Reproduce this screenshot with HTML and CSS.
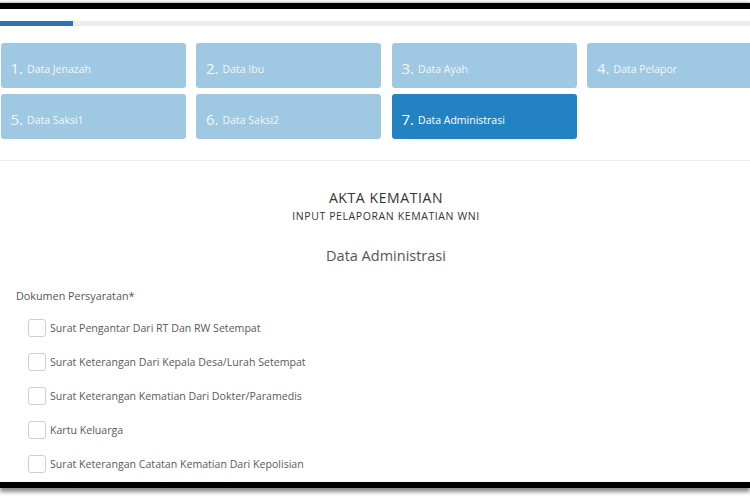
FILE: index.html
```html
<!DOCTYPE html>
<html lang="id">
<head>
<meta charset="utf-8">
<title>Akta Kematian</title>
<link rel="stylesheet" href="styles.css">
</head>
<body>
<div class="frame">
  <div class="page">
    <div class="progress"><div class="progress-fill" style="width:73px"></div></div>
    <div class="steps">
      <div class="step"><span class="num">1.</span><span class="lbl">Data Jenazah</span></div>
      <div class="step"><span class="num">2.</span><span class="lbl">Data Ibu</span></div>
      <div class="step"><span class="num">3.</span><span class="lbl">Data Ayah</span></div>
      <div class="step"><span class="num">4.</span><span class="lbl">Data Pelapor</span></div>
      <div class="step"><span class="num">5.</span><span class="lbl">Data Saksi1</span></div>
      <div class="step"><span class="num">6.</span><span class="lbl">Data Saksi2</span></div>
      <div class="step active"><span class="num">7.</span><span class="lbl">Data Administrasi</span></div>
    </div>
    <div class="divider"></div>
    <div class="heading">
      <h1 class="title">AKTA KEMATIAN</h1>
      <div class="subtitle">INPUT PELAPORAN KEMATIAN WNI</div>
      <h2 class="section">Data Administrasi</h2>
    </div>
    <div class="form">
      <div class="field-label">Dokumen Persyaratan*</div>
      <ul class="checks">
        <li class="check"><span class="box"></span><span>Surat Pengantar Dari RT Dan RW Setempat</span></li>
        <li class="check"><span class="box"></span><span>Surat Keterangan Dari Kepala Desa/Lurah Setempat</span></li>
        <li class="check"><span class="box"></span><span>Surat Keterangan Kematian Dari Dokter/Paramedis</span></li>
        <li class="check"><span class="box"></span><span>Kartu Keluarga</span></li>
        <li class="check"><span class="box"></span><span>Surat Keterangan Catatan Kematian Dari Kepolisian</span></li>
      </ul>
    </div>
  </div>
</div>
</body>
</html>
```

FILE: styles.css
```css
* { box-sizing: border-box; }
html, body { margin: 0; padding: 0; background: #fff; }
body {
  font-family: "Open Sans", "Liberation Sans", sans-serif;
  width: 750px;
  height: 500px;
  overflow: hidden;
}
.frame {
  margin-top: 3px;
  border-top: 6px solid #000;
  border-bottom: 6px solid #000;
  height: 485px;
  overflow: hidden;
  background: #fff;
  box-shadow: 0 4px 4px rgba(0,0,0,0.45), 0 -1px 2px rgba(0,0,0,0.3);
}
.page {
  width: 772px;
  height: 100%;
  background: #fff;
}
.progress {
  margin-top: 12px;
  height: 5px;
  background: #ededed;
}
.progress-fill {
  height: 100%;
  background: #2b72b6;
}
.steps {
  margin-top: 17px;
  padding-left: 0.5px;
  display: grid;
  grid-template-columns: repeat(4, 185px);
  column-gap: 10.5px;
  row-gap: 6px;
}
.step {
  height: 45px;
  border-radius: 3px;
  background: #9fc8e2;
  color: #f2f7fb;
  display: flex;
  align-items: center;
  padding-left: 10px;
  padding-top: 5px;
  gap: 4px;
}
.step.active { background: #2383c2; color: #fff; }
.num { font-size: 15px; }
.lbl { font-size: 10.5px; padding-top: 2px; }
.divider {
  margin-top: 21px;
  height: 1px;
  background: #efefef;
}
.heading {
  text-align: center;
  padding-top: 28px;
}
.title {
  margin: 0;
  font-size: 14px;
  font-weight: 400;
  letter-spacing: 0.6px;
  color: #333;
  line-height: 18px;
}
.subtitle {
  margin-top: 2px;
  font-size: 10.5px;
  letter-spacing: 0.6px;
  color: #333;
  line-height: 14px;
}
.section {
  margin: 23px 0 0;
  font-size: 14.5px;
  font-weight: 400;
  color: #555;
  line-height: 20px;
}
.form { padding-left: 16px; padding-top: 23px; }
.field-label {
  font-size: 10.8px;
  color: #555;
  line-height: 14px;
}
.checks {
  list-style: none;
  margin: 16px 0 0;
  padding: 0 0 0 12px;
  display: flex;
  flex-direction: column;
  gap: 16px;
}
.check {
  display: flex;
  align-items: center;
  gap: 4px;
  font-size: 10.6px;
  color: #5a5a5a;
  height: 18px;
}
.box {
  width: 18px;
  height: 18px;
  border: 1px solid #cfcfcf;
  border-radius: 3px;
  background: #fff;
  flex: none;
}
```
